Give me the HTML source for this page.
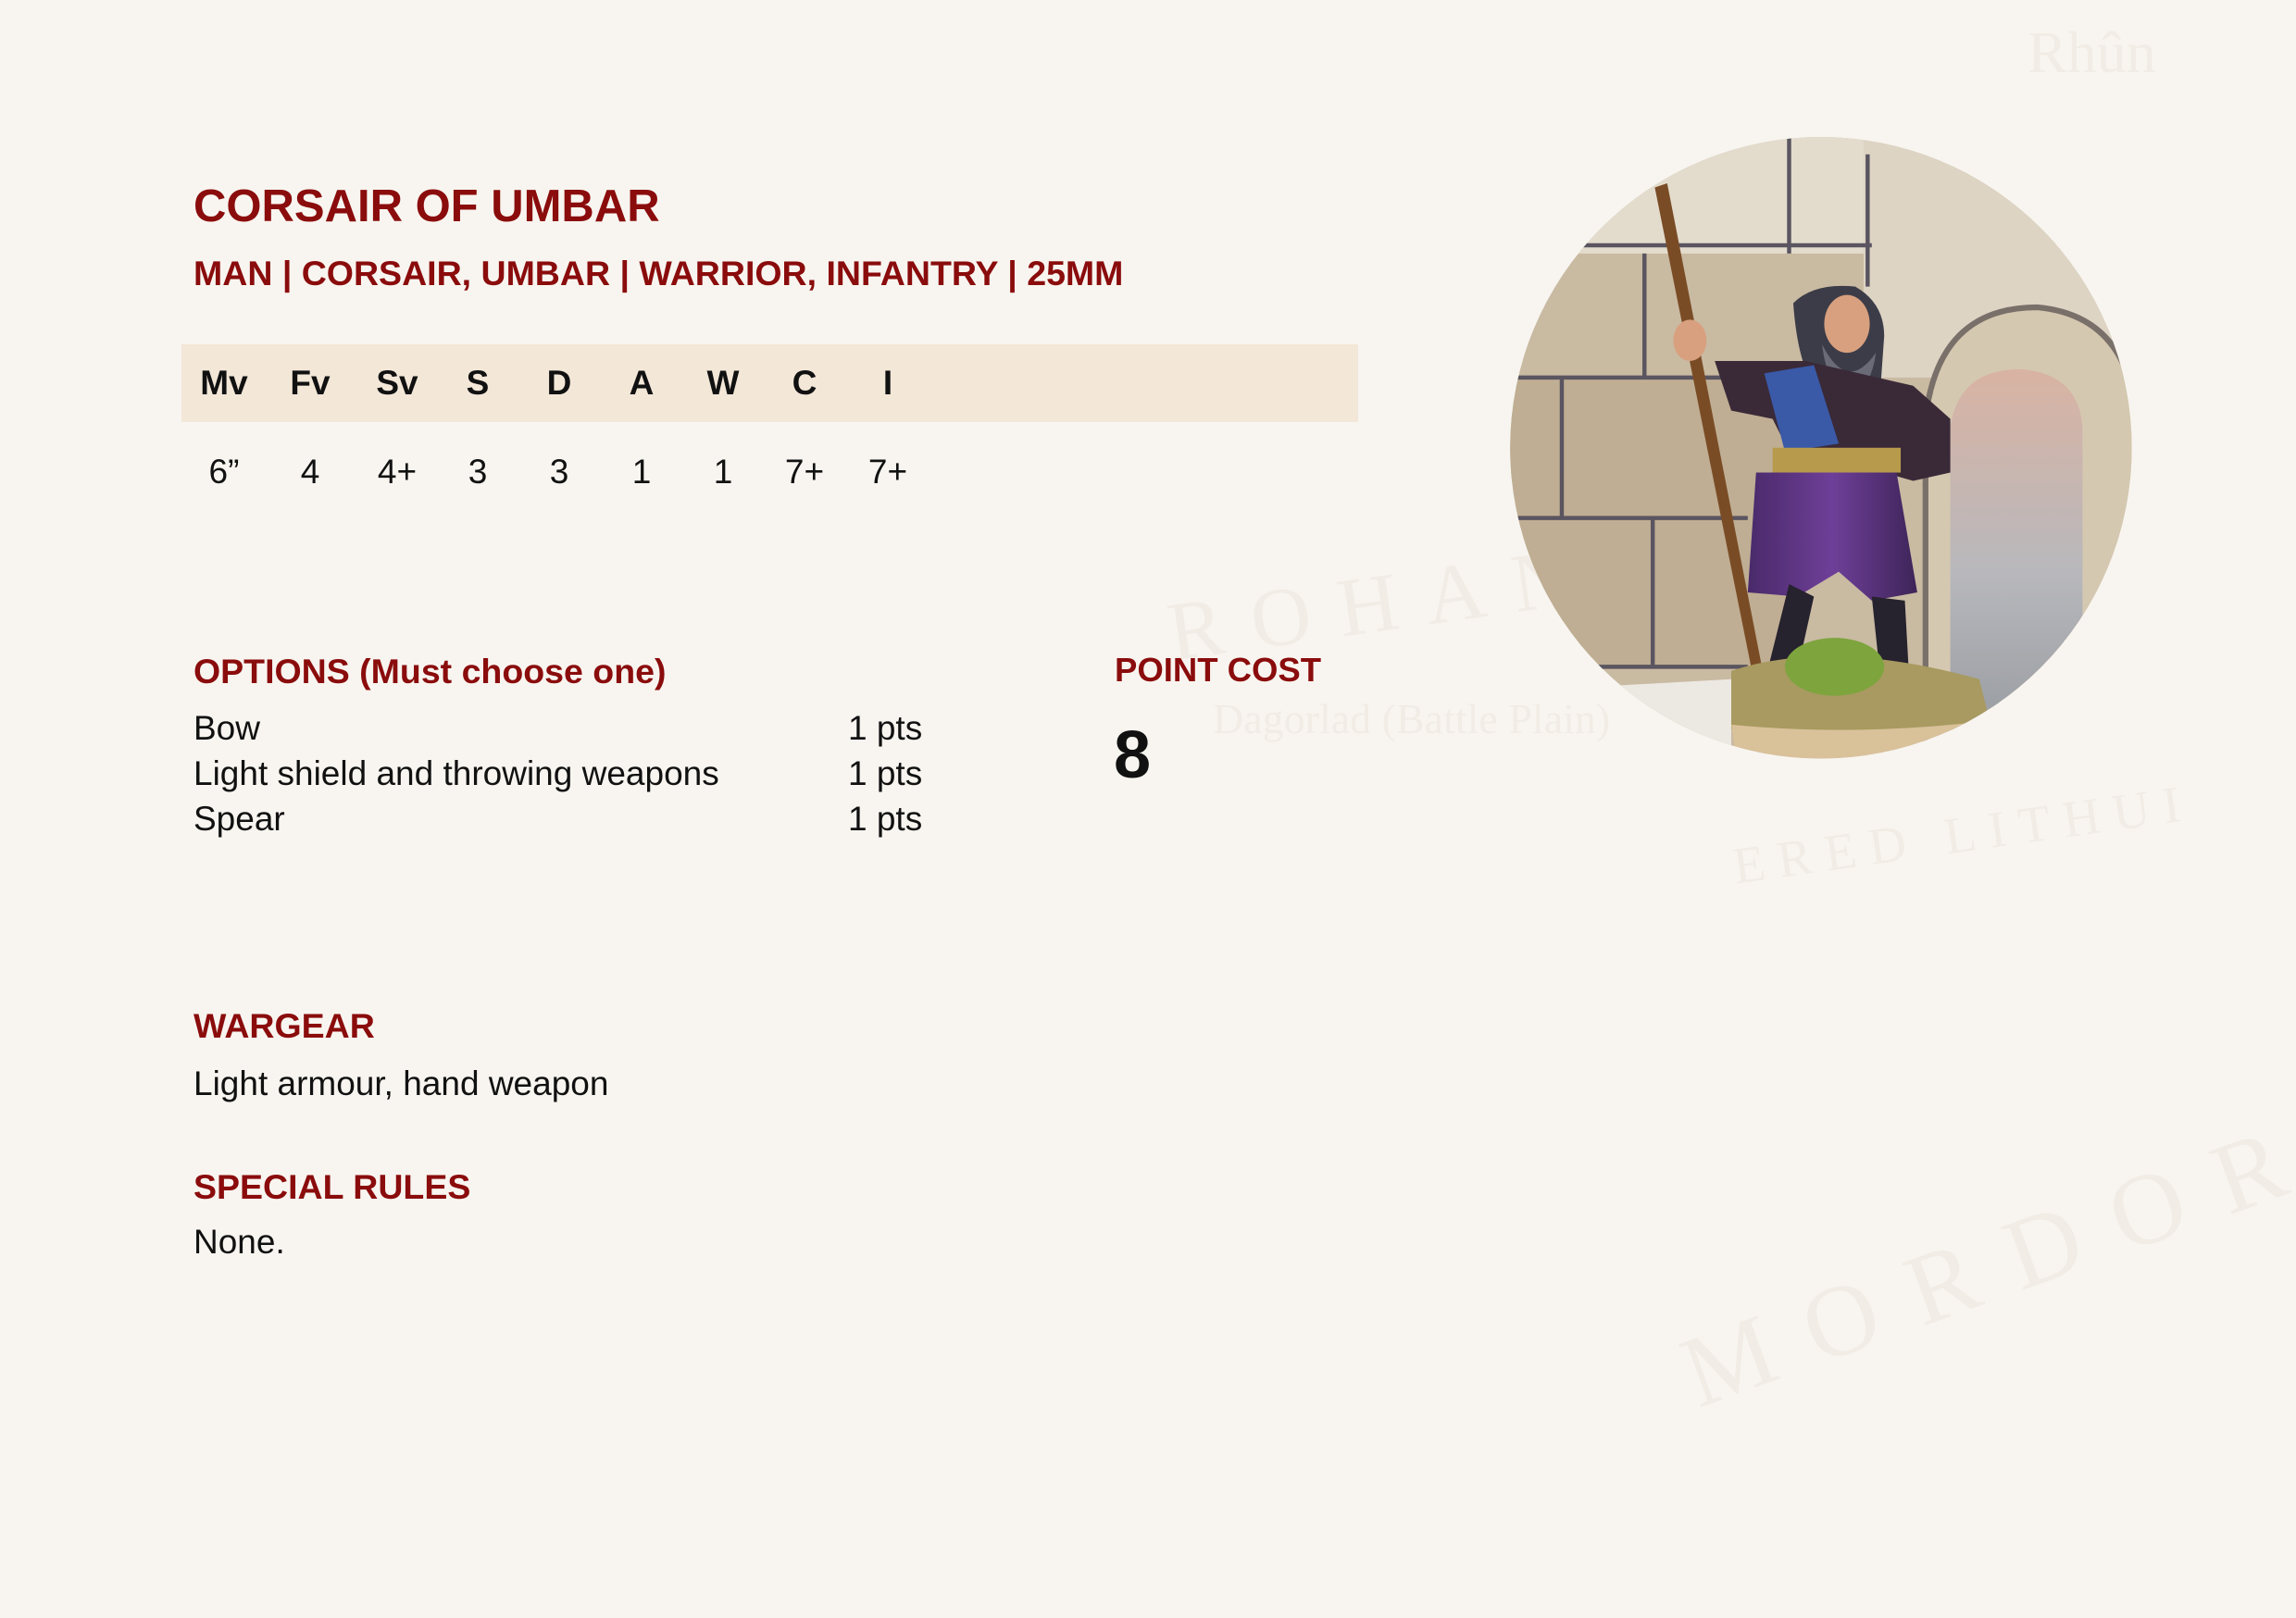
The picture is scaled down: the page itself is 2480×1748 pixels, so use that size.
<!DOCTYPE html>
<html><head><meta charset="utf-8"><style>
html,body{margin:0;padding:0}
body{width:2480px;height:1748px;background:#f8f5f0;position:relative;overflow:hidden;font-family:"Liberation Sans",Arial,sans-serif}
.a{position:absolute;white-space:nowrap;line-height:1}
.r{color:#8a0c0c;font-weight:bold}
.k{color:#111}
.bg{position:absolute;color:#f1ece5;font-family:"Liberation Serif",serif;white-space:nowrap}
</style></head><body>
<div class="bg" style="left:1260px;top:600px;font-size:90px;letter-spacing:30px;transform:rotate(-8deg)">ROHAN</div>
<div class="bg" style="left:1800px;top:1300px;font-size:110px;letter-spacing:40px;transform:rotate(-20deg)">MORDOR</div>
<div class="bg" style="left:1870px;top:870px;font-size:56px;letter-spacing:14px;transform:rotate(-8deg)">ERED LITHUI</div>
<div class="bg" style="left:1310px;top:750px;font-size:46px">Dagorlad (Battle Plain)</div>
<div class="bg" style="left:2190px;top:20px;font-size:64px">Rhûn</div>

<div class="a r" style="left:209px;top:199px;font-size:49px">CORSAIR OF UMBAR</div>
<div class="a r" style="left:209px;top:277px;font-size:37.5px">MAN | CORSAIR, UMBAR | WARRIOR, INFANTRY | 25MM</div>

<div style="position:absolute;left:196px;top:372px;width:1271px;height:84px;background:#f3e7d8"></div>
<div class="a k" style="left:0;top:395px;font-size:37px;font-weight:bold">
<span style="position:absolute;left:242px;transform:translateX(-50%)">Mv</span>
<span style="position:absolute;left:335px;transform:translateX(-50%)">Fv</span>
<span style="position:absolute;left:429px;transform:translateX(-50%)">Sv</span>
<span style="position:absolute;left:516px;transform:translateX(-50%)">S</span>
<span style="position:absolute;left:604px;transform:translateX(-50%)">D</span>
<span style="position:absolute;left:693px;transform:translateX(-50%)">A</span>
<span style="position:absolute;left:781px;transform:translateX(-50%)">W</span>
<span style="position:absolute;left:869px;transform:translateX(-50%)">C</span>
<span style="position:absolute;left:959px;transform:translateX(-50%)">I</span>
</div>
<div class="a k" style="left:0;top:491px;font-size:37px">
<span style="position:absolute;left:242px;transform:translateX(-50%)">6”</span>
<span style="position:absolute;left:335px;transform:translateX(-50%)">4</span>
<span style="position:absolute;left:429px;transform:translateX(-50%)">4+</span>
<span style="position:absolute;left:516px;transform:translateX(-50%)">3</span>
<span style="position:absolute;left:604px;transform:translateX(-50%)">3</span>
<span style="position:absolute;left:693px;transform:translateX(-50%)">1</span>
<span style="position:absolute;left:781px;transform:translateX(-50%)">1</span>
<span style="position:absolute;left:869px;transform:translateX(-50%)">7+</span>
<span style="position:absolute;left:959px;transform:translateX(-50%)">7+</span>
</div>

<div class="a r" style="left:209px;top:707px;font-size:37.5px">OPTIONS (Must choose one)</div>
<div class="a k" style="left:209px;top:768px;font-size:37px">Bow</div>
<div class="a k" style="left:209px;top:817px;font-size:37px">Light shield and throwing weapons</div>
<div class="a k" style="left:209px;top:866px;font-size:37px">Spear</div>
<div class="a k" style="left:916px;top:768px;font-size:37px">1 pts</div>
<div class="a k" style="left:916px;top:817px;font-size:37px">1 pts</div>
<div class="a k" style="left:916px;top:866px;font-size:37px">1 pts</div>

<div class="a r" style="left:1204px;top:706px;font-size:36.5px">POINT COST</div>
<div class="a k" style="left:1203px;top:780px;font-size:72px;font-weight:bold">8</div>

<div class="a r" style="left:209px;top:1090px;font-size:37.5px">WARGEAR</div>
<div class="a k" style="left:209px;top:1152px;font-size:37px">Light armour, hand weapon</div>
<div class="a r" style="left:209px;top:1264px;font-size:37.5px">SPECIAL RULES</div>
<div class="a k" style="left:209px;top:1323px;font-size:37px">None.</div>

<svg style="position:absolute;left:1620px;top:140px" width="700" height="700" viewBox="0 0 1568 1568">
<defs>
<clipPath id="c"><circle cx="777" cy="770" r="752"/></clipPath>
<linearGradient id="sky" x1="0" y1="0" x2="0" y2="1"><stop offset="0" stop-color="#d9b3a3"/><stop offset="0.5" stop-color="#b8b8bc"/><stop offset="1" stop-color="#8f949a"/></linearGradient>
<linearGradient id="pants" x1="0" y1="0" x2="1" y2="0"><stop offset="0" stop-color="#4a2a6a"/><stop offset="0.5" stop-color="#6e3f98"/><stop offset="1" stop-color="#3e2458"/></linearGradient>
</defs>
<g clip-path="url(#c)">
<rect width="1568" height="1568" fill="#c9baa2"/>
<rect x="0" y="0" width="900" height="300" fill="#e3dccd"/>
<rect x="880" y="0" width="700" height="600" fill="#ddd4c4"/>
<rect x="0" y="600" width="700" height="700" fill="#bfae93"/>
<g stroke="#5a5560" stroke-width="10" fill="none">
<path d="M0 280H900M0 600H650M0 940H600M0 1300H600M350 300V600M150 600V940M370 940V1300M700 20V300M890 60V380"/>
</g>
<path d="M1030 1568V700Q1060 430 1300 430Q1520 450 1540 700V1568Z" fill="#d5c8b0" stroke="#7a706a" stroke-width="14"/>
<path d="M1090 1568V720Q1110 580 1260 580Q1400 590 1410 720V1568Z" fill="url(#sky)"/>
<path d="M375 140L405 130L640 1330L615 1335Z" fill="#7a4c26"/>
<path d="M710 420Q760 370 860 380Q930 420 930 500L920 640Q880 660 830 640L760 620Q720 560 710 420Z" fill="#3c3c48"/>
<ellipse cx="840" cy="470" rx="55" ry="70" fill="#d8a07e"/>
<path d="M780 520Q840 640 910 540Q900 620 850 650Q790 620 780 520Z" fill="#6b6b78"/>
<path d="M520 560L740 560L1000 620L1090 700L1090 830L1000 850L860 810L700 780L660 700L560 680Z" fill="#3a2a38"/>
<path d="M640 590L760 570L820 760L690 780Z" fill="#3a5aa8"/>
<rect x="660" y="770" width="310" height="60" fill="#b89a4c"/>
<ellipse cx="460" cy="510" rx="40" ry="50" fill="#d8a07e"/>
<path d="M620 830L960 830L1010 1120L900 1140L820 1070L720 1130L600 1120Z" fill="url(#pants)"/>
<path d="M700 1100L650 1300L720 1310L760 1130Z" fill="#26222e"/>
<path d="M900 1130L920 1320L990 1320L980 1140Z" fill="#26222e"/>
<path d="M560 1310Q800 1230 1160 1330L1190 1450Q800 1480 560 1450Z" fill="#a89a60"/>
<ellipse cx="810" cy="1300" rx="120" ry="70" fill="#7ea43e"/>
<path d="M560 1440Q860 1470 1190 1430L1180 1568H580Z" fill="#d9c19a"/>
<path d="M200 1350L560 1330L560 1568H200Z" fill="#ece8e2"/>
</g>
</svg>
</body></html>
